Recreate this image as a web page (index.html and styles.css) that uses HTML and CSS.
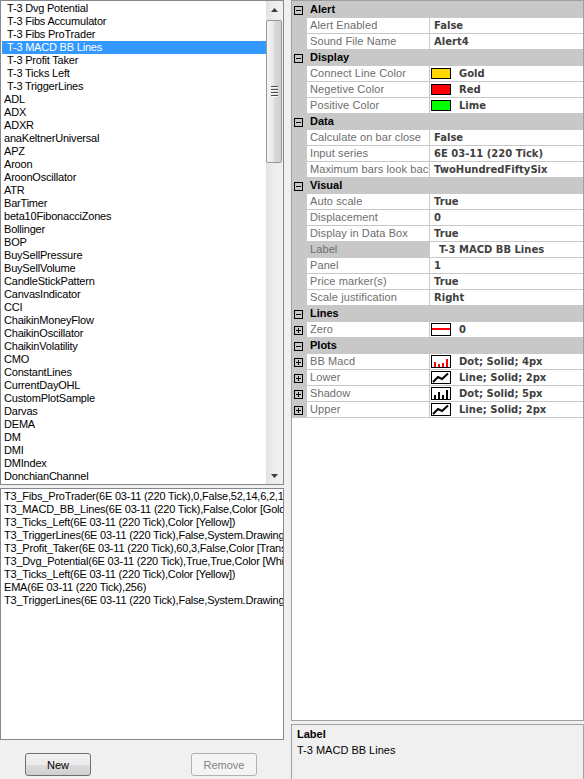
FILE: index.html
```html
<!DOCTYPE html>
<html>
<head>
<meta charset="utf-8">
<link rel="stylesheet" href="styles.css">
</head>
<body>
<div class="app">
  <div class="left">
    <div class="listbox list-top">
      <div class="items">
        <div class="item sp">T-3 Dvg Potential</div>
        <div class="item sp">T-3 Fibs Accumulator</div>
        <div class="item sp">T-3 Fibs ProTrader</div>
        <div class="item sp sel">T-3 MACD BB Lines</div>
        <div class="item sp">T-3 Profit Taker</div>
        <div class="item sp">T-3 Ticks Left</div>
        <div class="item sp">T-3 TriggerLines</div>
        <div class="item">ADL</div>
        <div class="item">ADX</div>
        <div class="item">ADXR</div>
        <div class="item">anaKeltnerUniversal</div>
        <div class="item">APZ</div>
        <div class="item">Aroon</div>
        <div class="item">AroonOscillator</div>
        <div class="item">ATR</div>
        <div class="item">BarTimer</div>
        <div class="item">beta10FibonacciZones</div>
        <div class="item">Bollinger</div>
        <div class="item">BOP</div>
        <div class="item">BuySellPressure</div>
        <div class="item">BuySellVolume</div>
        <div class="item">CandleStickPattern</div>
        <div class="item">CanvasIndicator</div>
        <div class="item">CCI</div>
        <div class="item">ChaikinMoneyFlow</div>
        <div class="item">ChaikinOscillator</div>
        <div class="item">ChaikinVolatility</div>
        <div class="item">CMO</div>
        <div class="item">ConstantLines</div>
        <div class="item">CurrentDayOHL</div>
        <div class="item">CustomPlotSample</div>
        <div class="item">Darvas</div>
        <div class="item">DEMA</div>
        <div class="item">DM</div>
        <div class="item">DMI</div>
        <div class="item">DMIndex</div>
        <div class="item">DonchianChannel</div>
      </div>
      <div class="vscroll">
        <div class="arrow"><svg width="7" height="4" viewBox="0 0 7 4"><path d="M0 4L3.5 0L7 4Z" fill="#3c3c3c"/></svg></div>
        <div class="track">
          <div class="thumb">
            <div class="grip"><i></i><i></i><i></i><i></i></div>
          </div>
        </div>
        <div class="arrow"><svg width="7" height="4" viewBox="0 0 7 4"><path d="M0 0L3.5 4L7 0Z" fill="#3c3c3c"/></svg></div>
      </div>
    </div>
    <div class="listbox list-bottom">
      <div class="items">
        <div class="item">T3_Fibs_ProTrader(6E 03-11 (220 Tick),0,False,52,14,6,2,1)</div>
        <div class="item">T3_MACD_BB_Lines(6E 03-11 (220 Tick),False,Color [Gold],Color [Red],Color [Lime])</div>
        <div class="item">T3_Ticks_Left(6E 03-11 (220 Tick),Color [Yellow])</div>
        <div class="item">T3_TriggerLines(6E 03-11 (220 Tick),False,System.Drawing.Font)</div>
        <div class="item">T3_Profit_Taker(6E 03-11 (220 Tick),60,3,False,Color [Transparent])</div>
        <div class="item">T3_Dvg_Potential(6E 03-11 (220 Tick),True,True,Color [White])</div>
        <div class="item">T3_Ticks_Left(6E 03-11 (220 Tick),Color [Yellow])</div>
        <div class="item">EMA(6E 03-11 (220 Tick),256)</div>
        <div class="item">T3_TriggerLines(6E 03-11 (220 Tick),False,System.Drawing.Font)</div>
      </div>
    </div>
    <div class="buttons">
      <button class="btn">New</button>
      <button class="btn" disabled>Remove</button>
    </div>
  </div>

  <div class="right">
    <div class="grid">
      <div class="row cat"><div class="gut"><svg width="9" height="9" viewBox="0 0 9 9"><rect x=".5" y=".5" width="8" height="8" fill="none" stroke="#000"/><path d="M2 4.5h5" stroke="#000"/></svg></div><div class="title">Alert</div></div>
      <div class="row"><div class="gut"></div><div class="name">Alert Enabled</div><div class="val">False</div></div>
      <div class="row"><div class="gut"></div><div class="name">Sound File Name</div><div class="val">Alert4</div></div>

      <div class="row cat"><div class="gut"><svg width="9" height="9" viewBox="0 0 9 9"><rect x=".5" y=".5" width="8" height="8" fill="none" stroke="#000"/><path d="M2 4.5h5" stroke="#000"/></svg></div><div class="title">Display</div></div>
      <div class="row"><div class="gut"></div><div class="name">Connect Line Color</div><div class="val ic"><span class="swatch gold"></span>Gold</div></div>
      <div class="row"><div class="gut"></div><div class="name">Negetive Color</div><div class="val ic"><span class="swatch red"></span>Red</div></div>
      <div class="row"><div class="gut"></div><div class="name">Positive Color</div><div class="val ic"><span class="swatch lime"></span>Lime</div></div>

      <div class="row cat"><div class="gut"><svg width="9" height="9" viewBox="0 0 9 9"><rect x=".5" y=".5" width="8" height="8" fill="none" stroke="#000"/><path d="M2 4.5h5" stroke="#000"/></svg></div><div class="title">Data</div></div>
      <div class="row"><div class="gut"></div><div class="name">Calculate on bar close</div><div class="val">False</div></div>
      <div class="row"><div class="gut"></div><div class="name">Input series</div><div class="val">6E 03-11 (220 Tick)</div></div>
      <div class="row"><div class="gut"></div><div class="name">Maximum bars look back</div><div class="val">TwoHundredFiftySix</div></div>

      <div class="row cat"><div class="gut"><svg width="9" height="9" viewBox="0 0 9 9"><rect x=".5" y=".5" width="8" height="8" fill="none" stroke="#000"/><path d="M2 4.5h5" stroke="#000"/></svg></div><div class="title">Visual</div></div>
      <div class="row"><div class="gut"></div><div class="name">Auto scale</div><div class="val">True</div></div>
      <div class="row"><div class="gut"></div><div class="name">Displacement</div><div class="val">0</div></div>
      <div class="row"><div class="gut"></div><div class="name">Display in Data Box</div><div class="val">True</div></div>
      <div class="row"><div class="gut"></div><div class="name sel">Label</div><div class="val edit">T-3 MACD BB Lines</div></div>
      <div class="row"><div class="gut"></div><div class="name">Panel</div><div class="val">1</div></div>
      <div class="row"><div class="gut"></div><div class="name">Price marker(s)</div><div class="val">True</div></div>
      <div class="row"><div class="gut"></div><div class="name">Scale justification</div><div class="val">Right</div></div>

      <div class="row cat"><div class="gut"><svg width="9" height="9" viewBox="0 0 9 9"><rect x=".5" y=".5" width="8" height="8" fill="none" stroke="#000"/><path d="M2 4.5h5" stroke="#000"/></svg></div><div class="title">Lines</div></div>
      <div class="row"><div class="gut"><svg width="9" height="9" viewBox="0 0 9 9"><rect x=".5" y=".5" width="8" height="8" fill="none" stroke="#000"/><path d="M2 4.5h5M4.5 2v5" stroke="#000"/></svg></div><div class="name">Zero</div><div class="val ic"><svg class="icon" width="20" height="13" viewBox="0 0 20 13"><rect x=".5" y=".5" width="19" height="12" fill="#fff" stroke="#000"/><rect x="1" y="5" width="18" height="2" fill="#f00"/></svg>0</div></div>

      <div class="row cat"><div class="gut"><svg width="9" height="9" viewBox="0 0 9 9"><rect x=".5" y=".5" width="8" height="8" fill="none" stroke="#000"/><path d="M2 4.5h5" stroke="#000"/></svg></div><div class="title">Plots</div></div>
      <div class="row"><div class="gut"><svg width="9" height="9" viewBox="0 0 9 9"><rect x=".5" y=".5" width="8" height="8" fill="none" stroke="#000"/><path d="M2 4.5h5M4.5 2v5" stroke="#000"/></svg></div><div class="name">BB Macd</div><div class="val ic"><svg class="icon" width="20" height="13" viewBox="0 0 20 13"><rect x=".5" y=".5" width="19" height="12" fill="#fff" stroke="#000"/><rect x="3" y="7" width="2" height="5" fill="#f00"/><rect x="7" y="9" width="2" height="3" fill="#f00"/><rect x="11" y="8" width="2" height="4" fill="#f00"/><rect x="15" y="4" width="2" height="8" fill="#f00"/></svg>Dot; Solid; 4px</div></div>
      <div class="row"><div class="gut"><svg width="9" height="9" viewBox="0 0 9 9"><rect x=".5" y=".5" width="8" height="8" fill="none" stroke="#000"/><path d="M2 4.5h5M4.5 2v5" stroke="#000"/></svg></div><div class="name">Lower</div><div class="val ic"><svg class="icon" width="20" height="13" viewBox="0 0 20 13"><rect x=".5" y=".5" width="19" height="12" fill="#fff" stroke="#000"/><polyline points="2,11 7,6 11,8 17,2.5" fill="none" stroke="#000" stroke-width="2"/></svg>Line; Solid; 2px</div></div>
      <div class="row"><div class="gut"><svg width="9" height="9" viewBox="0 0 9 9"><rect x=".5" y=".5" width="8" height="8" fill="none" stroke="#000"/><path d="M2 4.5h5M4.5 2v5" stroke="#000"/></svg></div><div class="name">Shadow</div><div class="val ic"><svg class="icon" width="20" height="13" viewBox="0 0 20 13"><rect x=".5" y=".5" width="19" height="12" fill="#fff" stroke="#000"/><rect x="3" y="8" width="2" height="4" fill="#000"/><rect x="7" y="5" width="2" height="7" fill="#000"/><rect x="11" y="8" width="2" height="4" fill="#000"/><rect x="15" y="3" width="2" height="9" fill="#000"/></svg>Dot; Solid; 5px</div></div>
      <div class="row last"><div class="gut"><svg width="9" height="9" viewBox="0 0 9 9"><rect x=".5" y=".5" width="8" height="8" fill="none" stroke="#000"/><path d="M2 4.5h5M4.5 2v5" stroke="#000"/></svg></div><div class="name">Upper</div><div class="val ic"><svg class="icon" width="20" height="13" viewBox="0 0 20 13"><rect x=".5" y=".5" width="19" height="12" fill="#fff" stroke="#000"/><polyline points="2,11 7,6 11,8 17,2.5" fill="none" stroke="#000" stroke-width="2"/></svg>Line; Solid; 2px</div></div>
    </div>
    <div class="desc">
      <div class="desc-title">Label</div>
      <div>T-3 MACD BB Lines</div>
    </div>
  </div>
</div>
</body>
</html>
```
FILE: styles.css
```css
html, body {
  margin: 0;
  padding: 0;
}
body {
  background: #f0f0f0;
  font-family: "Liberation Sans", Arial, sans-serif;
  font-size: 11px;
  color: #000;
  overflow: hidden;
}
.app {
  display: flex;
  width: 584px;
  height: 779px;
}
.left {
  width: 284px;
  display: flex;
  flex-direction: column;
  flex: none;
}
.right {
  width: 293px;
  margin-left: 7px;
  display: flex;
  flex-direction: column;
  flex: none;
}

/* list boxes */
.listbox {
  border: 1px solid #828790;
  background: #fff;
  box-sizing: border-box;
}
.list-top {
  height: 485px;
  display: flex;
}
.list-top .items {
  width: 265px;
  flex: none;
}
.items {
  box-sizing: border-box;
  padding: 1px 0 0 1px;
  overflow: hidden;
  letter-spacing: -0.2px;
}
.item {
  height: 13px;
  line-height: 13px;
  padding-left: 2px;
  white-space: nowrap;
  overflow: hidden;
}
.item.sp {
  padding-left: 5px;
}
.item.sel {
  background: #3399ff;
  color: #fff;
}
.list-bottom {
  height: 252px;
  margin-top: 3px;
}
.list-bottom .items {
  height: 100%;
}

/* scrollbar */
.vscroll {
  width: 17px;
  flex: none;
  display: flex;
  flex-direction: column;
  background: linear-gradient(to right, #e2e2e2, #ececec 35%, #f1f1f1);
}
.arrow {
  height: 17px;
  flex: none;
  display: flex;
  align-items: center;
  justify-content: center;
}
.arrow svg {
  display: block;
}
.track {
  flex: 1;
  padding-top: 2px;
}
.thumb {
  height: 143px;
  margin: 0 1px 0 0;
  border: 1px solid #999;
  border-radius: 2px;
  box-sizing: border-box;
  background: linear-gradient(to right, #f4f4f4, #e9e9e9 45%, #d9d9d9 55%, #cfcfcf);
  display: flex;
  align-items: center;
  justify-content: center;
}
.grip {
  display: flex;
  flex-direction: column;
  gap: 1px;
}
.grip i {
  display: block;
  width: 7px;
  height: 1px;
  background: #4a4a4a;
  border-bottom: 1px solid #fafafa;
}

/* buttons */
.buttons {
  display: flex;
  gap: 100px;
  padding: 13px 0 0 25px;
}
.btn {
  width: 66px;
  height: 23px;
  font-family: "Liberation Sans", Arial, sans-serif;
  font-size: 11px;
  color: #000;
  border: 1px solid #707070;
  border-radius: 3px;
  background: linear-gradient(#f2f2f2 0%, #ebebeb 50%, #dddddd 51%, #cfcfcf 100%);
  padding: 0;
  box-sizing: border-box;
}
.btn:disabled {
  border-color: #adb2b5;
  background: #f4f4f4;
  color: #838383;
}

/* property grid */
.grid {
  height: 721px;
  border: 1px solid #a0a0a0;
  background: #fff;
  box-sizing: border-box;
  flex: none;
}
.row {
  display: flex;
  height: 16px;
  border-top: 1px solid #c8c8c8;
  box-sizing: border-box;
}
.row.last {
  height: 17px;
  border-bottom: 1px solid #c8c8c8;
}
.cat {
  background: #c8c8c8;
}
.gut {
  width: 15px;
  flex: none;
  background: #c8c8c8;
  box-sizing: border-box;
  padding-left: 2px;
  display: flex;
  align-items: center;
}
.gut svg {
  display: block;
  margin-top: 2px;
}
.title {
  font-weight: bold;
  line-height: 15px;
  padding-left: 3px;
}
.name {
  width: 123px;
  flex: none;
  box-sizing: border-box;
  border-right: 1px solid #c8c8c8;
  padding-left: 3px;
  line-height: 15px;
  color: #6d6d6d;
  letter-spacing: 0.1px;
  white-space: nowrap;
  overflow: hidden;
}
.name.sel {
  background: #c8c8c8;
}
.val {
  flex: 1;
  min-width: 0;
  padding-left: 4px;
  line-height: 15px;
  font-family: "DejaVu Sans", "Liberation Sans", sans-serif;
  font-size: 10px;
  font-weight: bold;
  color: #404040;
  white-space: nowrap;
  overflow: hidden;
  display: flex;
  align-items: center;
}
.val.ic {
  padding-left: 1px;
}
.val.edit {
  padding-left: 9px;
}
.swatch {
  width: 20px;
  height: 11px;
  flex: none;
  border: 1px solid #000;
  box-sizing: border-box;
  margin-right: 8px;
}
.gold { background: #ffd700; }
.red { background: #ff0000; }
.lime { background: #00ff00; }
.icon {
  display: block;
  flex: none;
  margin-right: 8px;
}

/* description */
.desc {
  flex: 1;
  margin-top: 3px;
  border: 1px solid #a0a0a0;
  border-bottom: none;
  padding: 1px 5px 0;
  line-height: 16px;
}
.desc-title {
  font-weight: bold;
}
```
